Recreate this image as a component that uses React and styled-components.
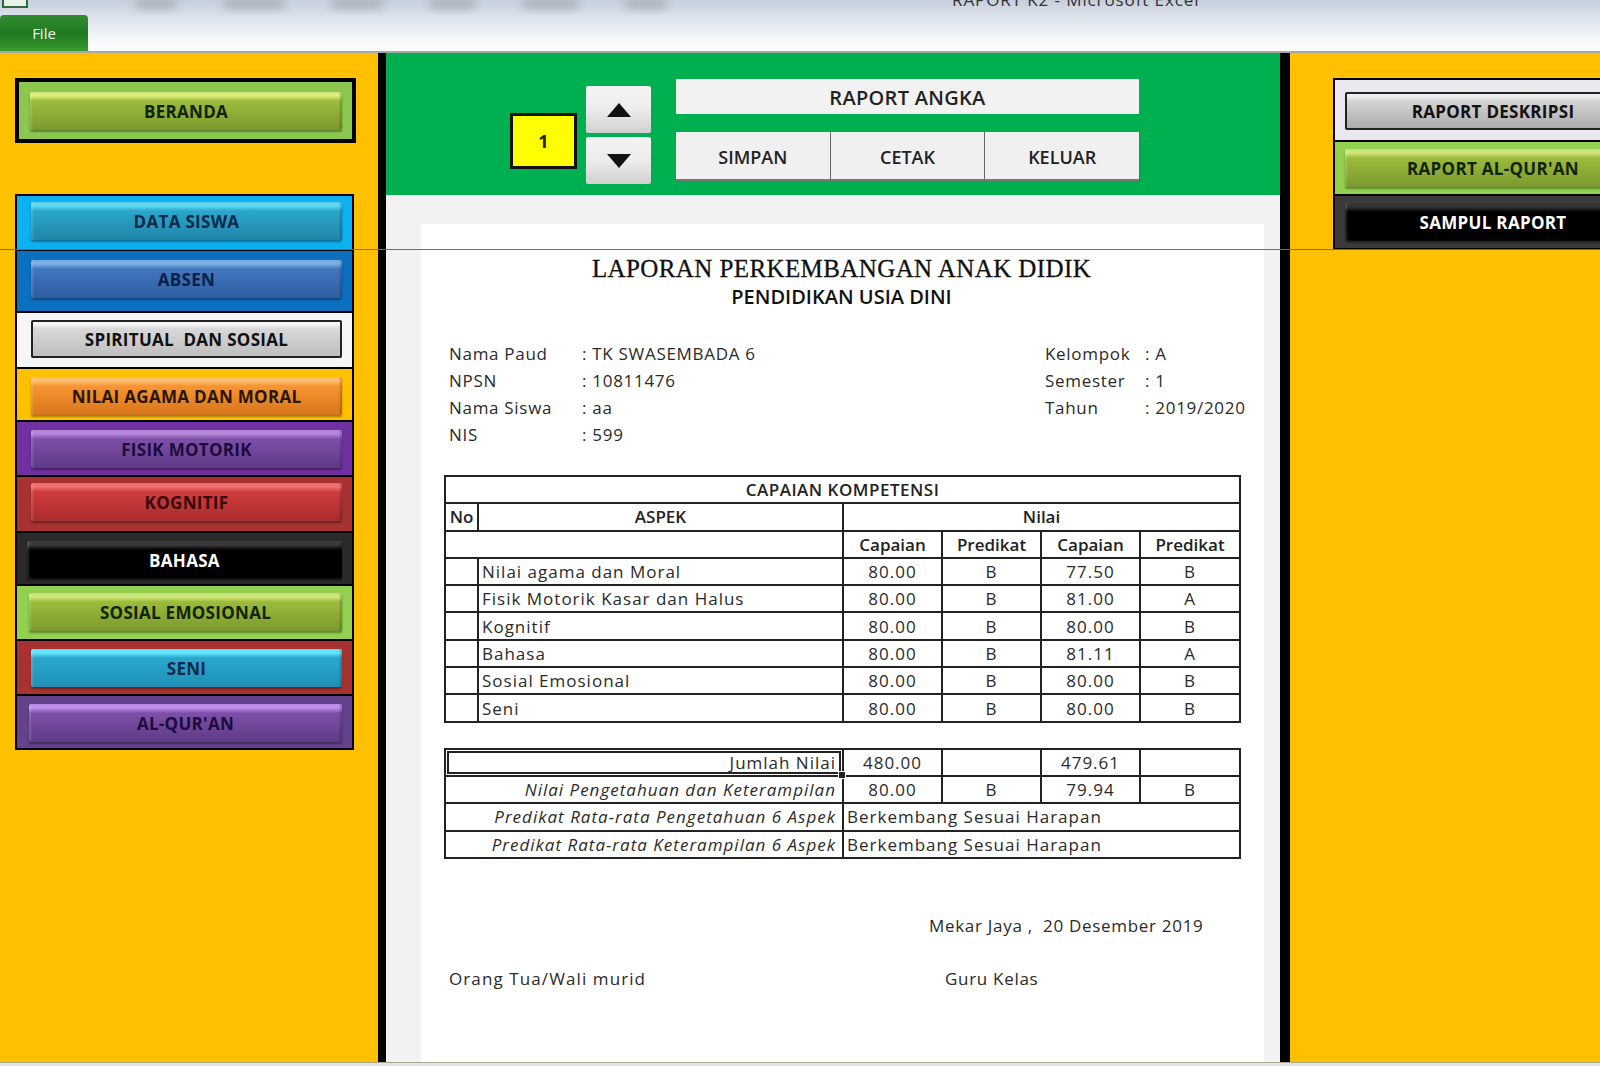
import React from 'react'
import styled, { createGlobalStyle } from 'styled-components'

const GlobalStyle = createGlobalStyle`
  html, body { margin: 0; padding: 0; background: #fff; }
  body { width: 1600px; height: 1066px; overflow: hidden; font-family: "Open Sans", "Liberation Sans", sans-serif; }
`

const menu = [
  { title: 'DATA SISWA', pane: '#0db0f0', top: '#5fd8f2', mid: '#2ba6cc', low: '#1f86a8', ink: '#0b2a4a', h: 55, pt: 6 },
  { title: 'ABSEN', pane: '#0b70c0', top: '#7ab0e6', mid: '#4277c0', low: '#2f5ca0', ink: '#0a1f4a', h: 62, pt: 9 },
  { title: 'SPIRITUAL  DAN SOSIAL', pane: '#f6f6f6', top: '#f6f6f6', mid: '#d8d8d8', low: '#bcbcbc', ink: '#111', h: 56, pt: 7, outlined: true },
  { title: 'NILAI AGAMA DAN MORAL', pane: '#ffc000', top: '#ffc070', mid: '#f79433', low: '#d8761c', ink: '#2a1500', h: 53, pt: 8 },
  { title: 'FISIK MOTORIK', pane: '#7030a0', top: '#b587dc', mid: '#7d50a8', low: '#5e3a86', ink: '#1d0b3a', h: 55, pt: 8 },
  { title: 'KOGNITIF', pane: '#a83232', top: '#f07070', mid: '#d03c3c', low: '#a82c2c', ink: '#3a0808', h: 56, pt: 6 },
  { title: 'BAHASA', pane: '#2a2a2a', top: '#3a3a3a', mid: '#000', low: '#000', ink: '#fff', h: 53, pt: 8, pl: 10 },
  { title: 'SOSIAL EMOSIONAL', pane: '#92d050', top: '#cfe77a', mid: '#9bbb3c', low: '#7b9a2e', ink: '#10240a', h: 55, pt: 7, pl: 12 },
  { title: 'SENI', pane: '#a83232', top: '#5fe8fa', mid: '#2ba6cc', low: '#1f90b8', ink: '#0b2a4a', h: 55, pt: 8 },
  { title: 'AL-QUR\'AN', pane: '#64428c', top: '#c08ef0', mid: '#7d50a8', low: '#5e3a86', ink: '#1d0b3a', h: 54, pt: 8, pl: 12 },
]

const side = [
  { title: 'RAPORT DESKRIPSI', pane: '#e8e8ee', top: '#f0f0f0', mid: '#d4d4d4', low: '#a8a8a8', ink: '#111', h: 62, pt: 12, pl: 10, outlined: true },
  { title: 'RAPORT AL-QUR\'AN', pane: '#92d050', top: '#cfe77a', mid: '#9bbb3c', low: '#7b9a2e', ink: '#10240a', h: 54, pt: 7, pl: 10 },
  { title: 'SAMPUL RAPORT', pane: '#3a3a3a', top: '#333', mid: '#000', low: '#000', ink: '#fff', h: 54, pt: 7, pl: 10 },
]

const scores = [
  ['Nilai agama dan Moral', '80.00', 'B', '77.50', 'B'],
  ['Fisik Motorik Kasar dan Halus', '80.00', 'B', '81.00', 'A'],
  ['Kognitif', '80.00', 'B', '80.00', 'B'],
  ['Bahasa', '80.00', 'B', '81.11', 'A'],
  ['Sosial Emosional', '80.00', 'B', '80.00', 'B'],
  ['Seni', '80.00', 'B', '80.00', 'B'],
]

const MenuButton = ({ item }) => (
  <Pane $bg={item.pane} $h={item.h} $pt={item.pt} $pl={item.pl}>
    <Bevel $item={item}>{item.title}</Bevel>
  </Pane>
)

const InfoLine = ({ label, value, wide }) => (
  <InfoRow>
    <InfoLabel $wide={wide}>{label}</InfoLabel>
    <span>: {value}</span>
  </InfoRow>
)

export default function App() {
  return (
    <>
      <GlobalStyle />
      <Page>
        <TopBar>
          <BlurStrip>
            <AppIcon />
            <BlurBlock $w={40} />
            <BlurBlock $w={60} />
            <BlurBlock $w={50} />
            <BlurBlock $w={45} />
            <BlurBlock $w={55} />
            <BlurBlock $w={40} />
            <WindowTitle>RAPORT K2 - Microsoft Excel</WindowTitle>
          </BlurStrip>
          <FileTab>File</FileTab>
        </TopBar>
        <Main>
          <LeftPane>
            <HomeBox>
              <Bevel $item={{ top: '#dcef7a', mid: '#9bbb3c', low: '#7b9a2e', ink: '#10240a' }}>BERANDA</Bevel>
            </HomeBox>
            <MenuGroup>
              {menu.map((item) => <MenuButton key={item.title} item={item} />)}
            </MenuGroup>
          </LeftPane>
          <Center>
            <GreenHeader>
              <PageNumber>1</PageNumber>
              <Spinner>
                <SpinButton aria-label="naik"><Arrow viewBox="0 0 24 14"><path d="M12 0 24 14H0z" /></Arrow></SpinButton>
                <SpinButton aria-label="turun"><Arrow viewBox="0 0 24 14"><path d="M0 0h24L12 14z" /></Arrow></SpinButton>
              </Spinner>
              <Actions>
                <ReportName>RAPORT ANGKA</ReportName>
                <ActionRow>
                  <ActionButton>SIMPAN</ActionButton>
                  <ActionButton>CETAK</ActionButton>
                  <ActionButton>KELUAR</ActionButton>
                </ActionRow>
              </Actions>
            </GreenHeader>
            <Gutter>
              <Sheet>
                <Title>LAPORAN PERKEMBANGAN ANAK DIDIK</Title>
                <Subtitle>PENDIDIKAN USIA DINI</Subtitle>
                <Info>
                  <InfoColumn>
                    <InfoLine wide label="Nama Paud" value="TK SWASEMBADA 6" />
                    <InfoLine wide label="NPSN" value="10811476" />
                    <InfoLine wide label="Nama Siswa" value="aa" />
                    <InfoLine wide label="NIS" value="599" />
                  </InfoColumn>
                  <InfoColumn>
                    <InfoLine label="Kelompok" value="A" />
                    <InfoLine label="Semester" value="1" />
                    <InfoLine label="Tahun" value="2019/2020" />
                  </InfoColumn>
                </Info>
                <Table>
                  <colgroup>
                    <col style={{ width: 33 }} />
                    <col style={{ width: 365 }} />
                    <col style={{ width: 99 }} />
                    <col style={{ width: 99 }} />
                    <col style={{ width: 99 }} />
                    <col style={{ width: 100 }} />
                  </colgroup>
                  <tbody>
                    <tr><Head colSpan={6} $spaced>CAPAIAN KOMPETENSI</Head></tr>
                    <tr><Head>No</Head><Head>ASPEK</Head><Head colSpan={4}>Nilai</Head></tr>
                    <tr>
                      <Head colSpan={2} />
                      <Head>Capaian</Head><Head>Predikat</Head><Head>Capaian</Head><Head>Predikat</Head>
                    </tr>
                    {scores.map((row) => (
                      <tr key={row[0]}>
                        <Cell />
                        <NameCell>{row[0]}</NameCell>
                        <Cell>{row[1]}</Cell>
                        <Cell>{row[2]}</Cell>
                        <Cell>{row[3]}</Cell>
                        <Cell>{row[4]}</Cell>
                      </tr>
                    ))}
                  </tbody>
                </Table>
                <SummaryTable>
                  <colgroup>
                    <col style={{ width: 398 }} />
                    <col style={{ width: 99 }} />
                    <col style={{ width: 99 }} />
                    <col style={{ width: 99 }} />
                    <col style={{ width: 100 }} />
                  </colgroup>
                  <tbody>
                    <tr>
                      <RightCell $selected>Jumlah Nilai<FillHandle /></RightCell>
                      <Cell>480.00</Cell><Cell /><Cell>479.61</Cell><Cell />
                    </tr>
                    <tr>
                      <RightCell $italic>Nilai Pengetahuan dan Keterampilan</RightCell>
                      <Cell>80.00</Cell><Cell>B</Cell><Cell>79.94</Cell><Cell>B</Cell>
                    </tr>
                    <tr>
                      <RightCell $italic>Predikat Rata-rata Pengetahuan 6 Aspek</RightCell>
                      <NameCell colSpan={4}>Berkembang Sesuai Harapan</NameCell>
                    </tr>
                    <tr>
                      <RightCell $italic>Predikat Rata-rata Keterampilan 6 Aspek</RightCell>
                      <NameCell colSpan={4}>Berkembang Sesuai Harapan</NameCell>
                    </tr>
                  </tbody>
                </SummaryTable>
                <Place>Mekar Jaya ,  20 Desember 2019</Place>
                <Signs>
                  <SignLeft>Orang Tua/Wali murid</SignLeft>
                  <SignRight>Guru Kelas</SignRight>
                </Signs>
              </Sheet>
            </Gutter>
          </Center>
          <RightPane>
            <SideGroup>
              {side.map((item) => <MenuButton key={item.title} item={item} />)}
            </SideGroup>
          </RightPane>
        </Main>
        <FreezeLine />
        <BottomEdge />
      </Page>
    </>
  )
}

const Page = styled.div`
  position: relative;
  width: 1600px;
  height: 1066px;
  overflow: hidden;
  display: flex;
  flex-direction: column;
`

const TopBar = styled.div`
  height: 53px;
  flex-shrink: 0;
  box-sizing: border-box;
  background: linear-gradient(#c6cfdc, #dde3ec 35%, #f9fbfb 85%);
  border-bottom: 2px solid #a8a8a8;
  display: flex;
  flex-direction: column;
`

const BlurStrip = styled.div`
  height: 15px;
  display: flex;
  align-items: flex-start;
  gap: 48px;
  padding-left: 2px;
  overflow: hidden;
`

const AppIcon = styled.div`
  width: 22px;
  height: 6px;
  border: 2px solid #2f6b3a;
  border-top: 0;
  background: #e8f2e8;
  margin-right: 60px;
`

const BlurBlock = styled.div`
  width: ${(p) => p.$w}px;
  height: 8px;
  background: #a4a9b2;
  filter: blur(5px);
`

const WindowTitle = styled.div`
  position: absolute;
  left: 952px;
  top: -12px;
  font: 17px "Open Sans", sans-serif;
  letter-spacing: 0.9px;
  color: #333;
  white-space: nowrap;
`

const FileTab = styled.div`
  width: 88px;
  height: 36px;
  box-sizing: border-box;
  border-radius: 4px 4px 0 0;
  background: linear-gradient(#2f8a2f, #1f7a22 55%, #3b9a30);
  color: #f2f5ea;
  font-size: 15px;
  display: flex;
  align-items: center;
  justify-content: center;
`

const Main = styled.div`
  flex: 1;
  display: flex;
  min-height: 0;
`

const LeftPane = styled.div`
  width: 378px;
  flex-shrink: 0;
  box-sizing: border-box;
  background: #ffc000;
  padding: 25px 0 0 15px;
`

const HomeBox = styled.div`
  width: 341px;
  height: 65px;
  box-sizing: border-box;
  border: 4px solid #000;
  background: #8cc850;
  padding: 10px 10px 9px 11px;
  display: flex;
`

const MenuGroup = styled.div`
  width: 339px;
  margin-top: 51px;
  box-sizing: border-box;
  border: 2px solid #000;
  display: flex;
  flex-direction: column;
  gap: 2px;
  background: #000;
`

const Pane = styled.div`
  height: ${(p) => p.$h - 2}px;
  background: ${(p) => p.$bg};
  box-sizing: border-box;
  padding: ${(p) => p.$pt}px 10px 0 ${(p) => p.$pl ?? 14}px;
  display: flex;
  align-items: flex-start;
`

const Bevel = styled.div`
  flex: 1;
  height: 38px;
  display: flex;
  align-items: center;
  justify-content: center;
  white-space: pre;
  font: 700 17px "Open Sans", sans-serif;
  letter-spacing: 0.3px;
  color: ${(p) => p.$item.ink};
  background: linear-gradient(${(p) => p.$item.top} 0, ${(p) => p.$item.top} 4px, ${(p) => p.$item.mid} 9px, ${(p) => p.$item.low} 100%);
  box-shadow: ${(p) => (p.$item.outlined
    ? 'inset 0 0 0 2px #222'
    : `0 2px 2px rgba(0, 0, 0, 0.35), inset 2px 0 2px rgba(255, 255, 255, 0.15), inset -2px 0 2px rgba(0, 0, 0, 0.2)`)};
  border-radius: 2px;
`

const Center = styled.div`
  width: 912px;
  flex-shrink: 0;
  box-sizing: border-box;
  border-left: 8px solid #000;
  border-right: 10px solid #000;
  display: flex;
  flex-direction: column;
  background: #f2f2f4;
`

const GreenHeader = styled.div`
  height: 142px;
  flex-shrink: 0;
  box-sizing: border-box;
  background: #00b050;
  padding: 26px 0 0 124px;
  display: flex;
  align-items: flex-start;
`

const PageNumber = styled.div`
  width: 67px;
  height: 56px;
  flex-shrink: 0;
  margin-top: 34px;
  box-sizing: border-box;
  border: 3px solid #111;
  background: #ffff00;
  font-weight: 700;
  font-size: 18px;
  color: #222;
  display: flex;
  align-items: center;
  justify-content: center;
`

const Spinner = styled.div`
  margin: 7px 0 0 9px;
  flex-shrink: 0;
  display: flex;
  flex-direction: column;
  gap: 4px;
`

const SpinButton = styled.div`
  width: 65px;
  height: 47px;
  background: linear-gradient(#f4f4f4, #ececec 50%, #d0d0d0);
  border-radius: 2px;
  display: flex;
  align-items: center;
  justify-content: center;
`

const Arrow = styled.svg`
  width: 26px;
  height: 14px;
  fill: #111;
`

const Actions = styled.div`
  margin-left: 25px;
  width: 463px;
  flex-shrink: 0;
`

const ReportName = styled.div`
  height: 35px;
  padding-top: 2px;
  box-sizing: border-box;
  background: #f2f2f2;
  font: 600 20px "Open Sans", sans-serif;
  letter-spacing: 0.3px;
  color: #222;
  display: flex;
  align-items: center;
  justify-content: center;
`

const ActionRow = styled.div`
  margin-top: 18px;
  display: flex;
  gap: 1px;
`

const ActionButton = styled.div`
  flex: 1;
  height: 49px;
  padding-top: 2px;
  box-sizing: border-box;
  background: #f0f0f0;
  border-bottom: 2px solid #777;
  font: 600 18px "Open Sans", sans-serif;
  color: #222;
  display: flex;
  align-items: center;
  justify-content: center;
  box-shadow: 1px 0 0 #666;
`

const Gutter = styled.div`
  flex: 1;
  min-height: 0;
  padding: 29px 16px 0 35px;
`

const Sheet = styled.div`
  height: 100%;
  box-sizing: border-box;
  background: #fff;
  padding: 30px 0 0 23px;
  color: #2a2a2a;
  font-size: 17px;
  letter-spacing: 0.7px;
`

const Title = styled.div`
  width: 795px;
  height: 29px;
  line-height: 29px;
  text-align: center;
  font-family: "Liberation Serif", serif;
  font-size: 25px;
  letter-spacing: 0.4px;
  -webkit-text-stroke: 0.3px #111;
  color: #111;
`

const Subtitle = styled.div`
  width: 795px;
  text-align: center;
  font: 600 20px "Open Sans", sans-serif;
  letter-spacing: 0;
  color: #111;
`

const Info = styled.div`
  margin-top: 30px;
  display: flex;
  height: 134px;
`

const InfoColumn = styled.div`
  padding-left: 5px;
  width: 591px;
  flex-shrink: 0;
  &:last-child { width: auto; }
`

const InfoRow = styled.div`
  height: 27px;
  line-height: 27px;
  white-space: nowrap;
`

const InfoLabel = styled.span`
  display: inline-block;
  width: ${(p) => (p.$wide ? 133 : 100)}px;
`

const Table = styled.table`
  width: 795px;
  table-layout: fixed;
  border-collapse: collapse;
  margin-top: 1px;
  border: 2px solid #222;
  letter-spacing: 1px;
  & td { height: 25.3px; padding: 0; border: 2px solid #222; line-height: 1; }
`

const SummaryTable = styled(Table)`
  margin-top: 25px;
`

const Head = styled.td`
  text-align: center;
  font: 600 17px "Open Sans", sans-serif;
  letter-spacing: ${(p) => (p.$spaced ? '0.5px' : '0')};
  color: #222;
`

const Cell = styled.td`
  text-align: center;
`

const NameCell = styled.td`
  padding-left: 3px !important;
  white-space: nowrap;
`

const RightCell = styled.td`
  position: relative;
  text-align: right;
  white-space: nowrap;
  padding-right: 6px !important;
  font-style: ${(p) => (p.$italic ? 'italic' : 'normal')};
  ${(p) => p.$selected && 'outline: 2px solid #222; outline-offset: -4px;'}
`

const FillHandle = styled.span`
  position: absolute;
  right: -4px;
  bottom: -4px;
  width: 6px;
  height: 6px;
  background: #222;
  border: 1px solid #fff;
`

const Place = styled.div`
  margin: 55px 0 0 485px;
  white-space: pre;
`

const Signs = styled.div`
  margin-top: 30px;
  padding-left: 5px;
  display: flex;
`

const SignLeft = styled.span`
  width: 496px;
  flex-shrink: 0;
  letter-spacing: 1.1px;
`

const SignRight = styled.span`
  white-space: nowrap;
`

const RightPane = styled.div`
  flex: 1;
  background: #ffc000;
  padding: 25px 0 0 43px;
  overflow: hidden;
`

const SideGroup = styled.div`
  width: 320px;
  box-sizing: border-box;
  border: 2px solid #000;
  display: flex;
  flex-direction: column;
  gap: 2px;
  background: #000;
`

const FreezeLine = styled.div`
  position: absolute;
  left: 0;
  right: 0;
  top: 249px;
  height: 1px;
  background: #6f6f6f;
`

const BottomEdge = styled.div`
  position: absolute;
  left: 0;
  right: 0;
  bottom: 0;
  height: 3px;
  background: #e4e4e4;
  border-top: 1px solid #a8a88c;
`
